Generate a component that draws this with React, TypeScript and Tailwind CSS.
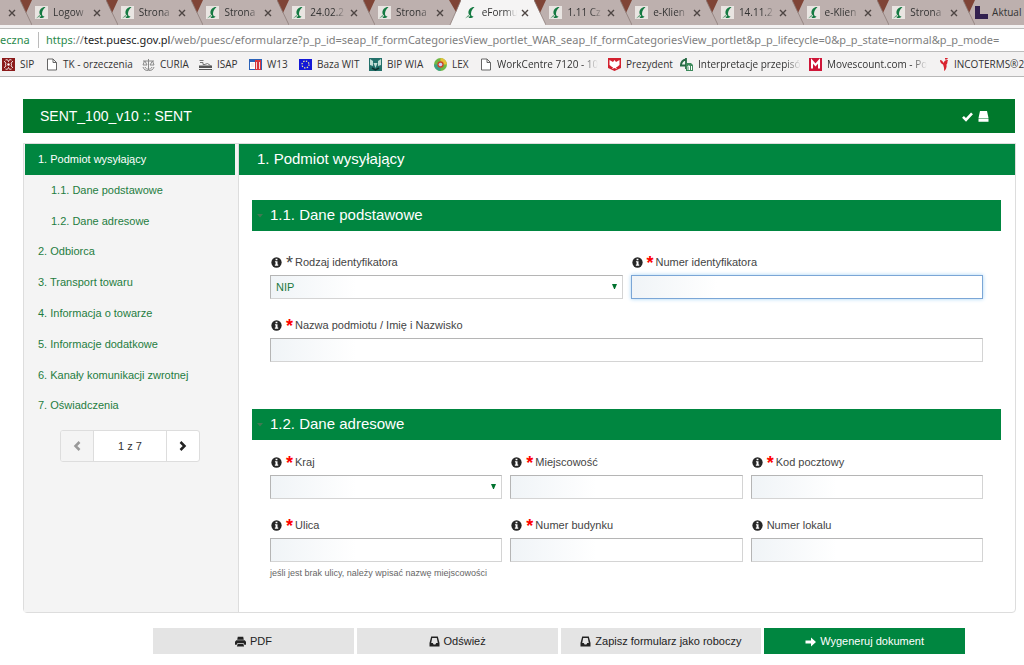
import type { ReactNode } from 'react'

const tabs = [
  { title: 'Logow' },
  { title: 'Strona' },
  { title: 'Strona' },
  { title: '24.02.2' },
  { title: 'Strona' },
  { title: 'eFormu', active: true },
  { title: '1.11 Cz' },
  { title: 'e-Klien' },
  { title: '14.11.2' },
  { title: 'e-Klien' },
  { title: 'Strona' },
]

const steps = [
  { label: '1. Podmiot wysyłający', active: true },
  { label: '1.1. Dane podstawowe', nested: true },
  { label: '1.2. Dane adresowe', nested: true },
  { label: '2. Odbiorca' },
  { label: '3. Transport towaru' },
  { label: '4. Informacja o towarze' },
  { label: '5. Informacje dodatkowe' },
  { label: '6. Kanały komunikacji zwrotnej' },
  { label: '7. Oświadczenia' },
]

/* Ikony */

function PuescIcon({ active }: { active?: boolean }) {
  return (
    <svg viewBox="0 0 13 13" className="size-[13px] shrink-0" aria-hidden="true">
      {!active && <rect width="13" height="13" fill="#e9e5e2" />}
      <path d="M10.500 1C7.500.6 4.600 3 4.400 6.200c0 1.800.7 2.800 1.800 3.400L4.500 12c2.500.3 4.300-.4 5-1.600-1.600 0-2.600-1-2.500-2.900C7.100 5 8.500 2.800 10.500 1z" fill="#157a42" />
      <path d="M1 12.500l3.400-3.500 1.300 1z" fill="#5f9f78" />
    </svg>
  )
}

function CloseIcon() {
  return (
    <svg viewBox="0 0 8 8" className="size-2" aria-hidden="true">
      <path d="M1 1l6 6M7 1L1 7" stroke="#4d4543" strokeWidth="1.400" />
    </svg>
  )
}

function PageIcon() {
  return (
    <svg viewBox="0 0 11 13" className="h-[13px] w-[11px] shrink-0" aria-hidden="true">
      <path d="M.5 1H6l3.500 3.500V12h-9zM6 1v3.500h3.500" fill="#fff" stroke="#666" />
    </svg>
  )
}

function InfoIcon() {
  return (
    <svg viewBox="0 0 12 12" className="size-[11px] shrink-0" aria-hidden="true">
      <circle cx="6" cy="6" r="5.600" fill="#262626" />
      <path d="M5 2h2v1.600H5zM4.300 4.600h2.800v3.700h.8v1.300H4.200V8.300H5V5.800h-.7z" fill="#fff" />
    </svg>
  )
}

function InboxIcon() {
  return (
    <svg viewBox="0 0 11 11" className="size-[11px]" aria-hidden="true">
      <path fillRule="evenodd" d="M2.200.5h6.600L10.500 7v3.500H.5V7zM3.200 2 2.200 7h1.600l.8 1.500h1.800L7.200 7h1.600l-1-5z" fill="#222" />
    </svg>
  )
}

function PrintIcon() {
  return (
    <svg viewBox="0 0 11 11" className="size-[11px]" aria-hidden="true">
      <path d="M2.800.8h5.400l.6 3H2.200zM1.300 4.300h8.400L11 5.800v3H9.300L8.700 7.300H2.300l-.6 1.500H0v-3z" fill="#222" />
      <path d="M2.600 8h5.800l.7 2.500H1.900z" fill="#222" />
    </svg>
  )
}

function Chevron({ flip }: { flip?: boolean }) {
  return (
    <svg viewBox="0 0 8 10" className="h-[10px] w-2" aria-hidden="true">
      <path d={flip ? 'M6.500 1l-4 4 4 4' : 'M1.500 1l4 4-4 4'} fill="none" stroke={flip ? '#999' : '#222'} strokeWidth="2.500" />
    </svg>
  )
}

const bookmarks: { label: string; width: string; narrow?: boolean; icon: ReactNode }[] = [
  {
    label: 'SIP',
    width: 'w-[45px]',
    icon: (
      <>
        <rect width="13" height="13" fill="#8b1a1a" />
        <path d="M3.500 2a2 2 0 0 1 3 1.500A2 2 0 0 1 9.500 2M3.500 11a2 2 0 0 0 3-1.500A2 2 0 0 0 9.500 11M2 3.500A2 2 0 0 1 3.500 6.500 2 2 0 0 1 2 9.500M11 3.500A2 2 0 0 0 9.500 6.500 2 2 0 0 0 11 9.500" fill="none" stroke="#fff" />
        <circle cx="6.500" cy="6.500" r="1.200" fill="#fff" />
      </>
    ),
  },
  { label: 'TK - orzeczenia', width: 'w-[95px]', icon: null },
  {
    label: 'CURIA',
    width: 'w-[57px]',
    icon: <path d="M6.500 1v11M1 3h11M2.500 3L1 7h4L3 3M10.500 3L8 7h4zM3 9c1 3 6 3 7 0M1 9c1 5 10 5 11 0" fill="none" stroke="#888" />,
  },
  {
    label: 'ISAP',
    width: 'w-[50px]',
    icon: (
      <>
        <path d="M.5 2.500h4M1 4.500h3v2h2M5.500 6.500l3-1 3 2" fill="none" stroke="#777" />
        <path d="M0 7.500h13V10H0zM0 11h13v1H0z" fill="#555" />
      </>
    ),
  },
  {
    label: 'W13',
    width: 'w-[50px]',
    icon: (
      <>
        <rect y="1" width="13" height="11" fill="#2b62b8" />
        <path d="M1 4h5v7H1z" fill="#fff" />
        <path d="M6 2h6v10H6z" fill="#d8353c" />
        <path d="M2 6h3M2 8h3M7.500 4v7M10.500 4v7" fill="none" stroke="#f3d7da" />
      </>
    ),
  },
  {
    label: 'Baza WIT',
    width: 'w-[70px]',
    icon: (
      <>
        <rect y="1" width="13" height="11" fill="#1418d8" />
        <circle cx="6.500" cy="6.500" r="3.500" fill="none" stroke="#f4ef9a" strokeWidth="1.300" strokeDasharray="1.300 1.450" />
      </>
    ),
  },
  {
    label: 'BIP WIA',
    width: 'w-[65px]',
    icon: (
      <>
        <rect width="13" height="13" fill="#23706a" />
        <path d="M1 1l3 2v5l-3-1zM12 1L9 3v5l3-1zM4.500 5h4l-2 5z" fill="#c3dcd5" />
        <path d="M3 10l3.500 2L10 10" fill="none" stroke="#0f2f2d" strokeWidth="1.500" />
      </>
    ),
  },
  {
    label: 'LEX',
    width: 'w-[47px]',
    icon: (
      <>
        <circle cx="6.500" cy="6.500" r="6.500" fill="#6fb844" />
        <path d="M6.500 0A6.500 6.500 0 0 1 13 6.500H6.500z" fill="#e6c136" />
        <path d="M0 6.500A6.500 6.500 0 0 0 6.500 13V6.500z" fill="#39a08a" />
        <circle cx="6.500" cy="6.500" r="3.200" fill="#c8462e" />
        <circle cx="6.500" cy="6.500" r="1.800" fill="#c9d3ff" />
      </>
    ),
  },
  { label: 'WorkCentre 7120 - 10', width: 'w-[127px]', icon: null },
  {
    label: 'Prezydent',
    width: 'w-[72px]',
    icon: (
      <>
        <path d="M0 0h13v10l-6.500 3L0 10z" fill="#d3202e" />
        <path d="M1.500 2L5 4l1.500-2L8 4l3.500-2v5L9 9H8l1 2-2.500-1L4 11l1-2H4L1.500 7z" fill="#fff" />
      </>
    ),
  },
  {
    label: 'Interpretacje przepisó',
    width: 'w-[129px]',
    icon: (
      <>
        <path d="M6 0v11M1 7.500C1 4 3 2 6 1.500M0 7.500h7" fill="none" stroke="#276b45" strokeWidth="1.800" />
        <path d="M6 5h5l2 2v6H6z" fill="#3d8a5c" />
        <path d="M8 12V8h1.500v4M11.500 8v4" fill="none" stroke="#fff" />
      </>
    ),
  },
  {
    label: 'Movescount.com - Po',
    width: 'w-[130px]',
    icon: (
      <>
        <rect width="13" height="13" fill="#cf1638" />
        <path d="M3 10.500V3l3.500 4L10 3v7.500" fill="none" stroke="#fff" strokeWidth="2" />
      </>
    ),
  },
  {
    label: 'INCOTERMS®2',
    width: 'w-[84px]',
    narrow: true,
    icon: <path d="M1 2c2 0 3 1.500 3.500 3C5 3 6.500 1.500 9 2c-1 1.500 0 3-1.500 4.500C8 9 7 12 5 13c.5-3-.5-5-1-6.500C2 6 1 4 1 2zM6 0h3l-1 1.500H6z" fill="#d9232e" />,
  },
]

/* Ukośna krawędź między kartami przeglądarki */
function TabEdge({ before, after }: { before?: boolean; after?: boolean }) {
  return (
    <svg viewBox="0 0 12 25" className="h-[25px] w-3 shrink-0" aria-hidden="true">
      <rect width="12" height="25" fill="#bdb0ae" />
      {before && <path d="M0 0l12 25H0z" fill="#f5f4f4" />}
      {after && <path d="M12 0L1 25h11z" fill="#f5f4f4" />}
      <path d={after ? 'M0 0h12L7 12z' : 'M0 0h12L6 13z'} fill="#7f4436" />
      <path d={after ? 'M12 0L1 25' : 'M0 0l12 25'} fill="none" stroke="#8d7c79" strokeWidth=".8" />
    </svg>
  )
}

function Browser() {
  return (
    <header className="overflow-hidden font-['Open_Sans','Noto_Sans',sans-serif] text-[10px] text-[#333]">
      <div className="flex h-[25px] bg-[#bdb0ae]">
        <button type="button" aria-label="Zamknij kartę" className="flex w-5 shrink-0 items-center justify-center pl-1">
          <CloseIcon />
        </button>
        {tabs.map((tab, i) => (
          <div key={i} className="flex min-w-0 flex-1">
            <TabEdge before={tabs[i - 1]?.active} after={tab.active} />
            <div className={`flex min-w-0 flex-1 items-center pr-[5px] pl-[3px] ${tab.active ? 'bg-[#f5f4f4]' : ''}`}>
              <PuescIcon active={tab.active} />
              <span className="ml-[5px] min-w-0 flex-1 whitespace-nowrap [mask-image:linear-gradient(to_right,black_65%,transparent)]">
                {tab.title}
              </span>
              <button type="button" aria-label="Zamknij kartę" className="ml-1 shrink-0">
                <CloseIcon />
              </button>
            </div>
          </div>
        ))}
        <div className="flex w-[61px] shrink-0">
          <TabEdge />
          <div className="flex min-w-0 flex-1 items-center gap-1 overflow-hidden">
            <svg viewBox="0 0 13 13" className="size-[13px] shrink-0" aria-hidden="true">
              <path d="M0 0h5v8h8v5H0z" fill="#32214f" />
            </svg>
            <span className="whitespace-nowrap">Aktual</span>
          </div>
        </div>
      </div>

      {/* Pasek adresu */}
      <div className="border-b border-[#bcbcbc] bg-[#f3f2f2] pt-[3px]">
        <div className="flex h-[23px] items-center border-t border-[#bcbcbc] bg-white font-['Noto_Sans',sans-serif] text-[11px] whitespace-nowrap text-[#808080]">
          <span className="w-[30px] shrink-0 text-[#2b8a4c]">eczna</span>
          <span className="mr-[7px] ml-2 h-4 w-px shrink-0 bg-[#bbb]" />
          <span>
            <span className="text-[#2b8a4c]">https</span>://<span className="text-[#222]">test.puesc.gov.pl</span>
            /web/puesc/eformularze?p_p_id=seap_lf_formCategoriesView_portlet_WAR_seap_lf_formCategoriesView_portlet&amp;p_p_lifecycle=0&amp;p_p_state=normal&amp;p_p_mode=
          </span>
        </div>
      </div>

      {/* Zakładki */}
      <nav className="flex h-[25px] items-center border-b border-[#b8b8b8] bg-[#f3f2f2] pl-[2px]">
        {bookmarks.map((b) => (
          <a key={b.label} href="#" className={`flex shrink-0 items-center gap-[5px] ${b.width}`}>
            {b.icon ? (
              <svg
                viewBox={b.narrow ? '0 0 10 13' : '0 0 13 13'}
                className={b.narrow ? 'h-[13px] w-[10px] shrink-0' : 'size-[13px] shrink-0'}
                aria-hidden="true"
              >
                {b.icon}
              </svg>
            ) : (
              <PageIcon />
            )}
            <span className={b.label.length > 15 ? 'whitespace-nowrap [mask-image:linear-gradient(to_right,black_85%,transparent)]' : 'whitespace-nowrap'}>
              {b.label}
            </span>
          </a>
        ))}
      </nav>
    </header>
  )
}

type FieldProps = {
  id: string
  label: string
  mark?: 'red' | 'gray'
  options?: string[]
  hint?: string
  focused?: boolean
  className?: string
}

function Field({ id, label, mark, options, hint, focused, className = '' }: FieldProps) {
  const box = 'block h-6 w-full rounded-none border bg-linear-to-r from-[#f0f4f7] to-white to-[85px] px-[5px] text-[11px] text-[#1b7a3e] outline-none'
  const edge = focused
    ? 'border-[#7ba6d6] shadow-[0_0_4px_#a5d3f5]'
    : 'border-[#d4d4d4] border-t-[#b5b5b5] border-l-[#b5b5b5]'

  return (
    <div className={className}>
      <label htmlFor={id} className="mb-1 flex h-[18px] items-center gap-1 pl-px text-[#444]">
        <InfoIcon />
        <span className="flex items-center gap-[2px]">
          {mark && (
            <span className={`h-[18px] text-[18px] leading-[20px] ${mark === 'red' ? 'font-bold text-[#f00]' : 'text-[#444]'}`}>*</span>
          )}
          {label}
        </span>
      </label>
      {options ? (
        <div className="relative">
          <select id={id} className={`${box} ${edge} appearance-none`}>
            {options.map((o) => (
              <option key={o}>{o}</option>
            ))}
          </select>
          <svg viewBox="0 0 6 6" className="pointer-events-none absolute top-[9px] right-[6px] size-[5px]" aria-hidden="true">
            <path d="M0 0h6L3.500 6h-1z" fill="#00722e" />
          </svg>
        </div>
      ) : (
        <input id={id} type="text" className={`${box} ${edge}`} />
      )}
      {hint && <p className="mt-1 text-[9px] leading-[14px] text-[#666]">{hint}</p>}
    </div>
  )
}

function SectionTitle({ children }: { children: ReactNode }) {
  return (
    <h3 className="flex h-[31px] items-center gap-[7px] bg-[#008640] pl-[5px] text-[15px] text-white">
      <svg viewBox="0 0 6 4" className="h-1 w-[6px]" aria-hidden="true">
        <path d="M0 0h6L3 3.500z" fill="#3f7a52" />
      </svg>
      {children}
    </h3>
  )
}

export default function App() {
  return (
    <div className="min-h-screen bg-white font-['Liberation_Sans',Arial,sans-serif] text-[11px] text-[#333]">
      <Browser />

      <main className="pt-[22px] pr-2 pb-[11px] pl-[23px]">
        <div className="mr-px flex h-[34px] items-center justify-between bg-[#00792c] pr-[26px] pl-[17px] text-white">
          <h1 className="text-[14px]">SENT_100_v10 :: SENT</h1>
          <div className="flex items-center gap-[5px]">
            <svg viewBox="0 0 11 11" className="size-[11px]" aria-label="Sprawdź">
              <path d="M1 5.800l3 3 6-6.500" fill="none" stroke="#fff" strokeWidth="2.600" />
            </svg>
            <svg viewBox="0 0 11 11" className="size-[11px]" aria-label="Dysk">
              <path d="M2 0h7l1.500 7h-10zM.5 7.600h10v3.200H.5z" fill="#fff" />
            </svg>
          </div>
        </div>

        <div className="mt-[10px] flex rounded-b border border-[#ddd]">
          <aside className="w-[215px] shrink-0 border-r border-[#ddd] bg-[#f4f4f4] pb-[149px]">
            <ul className="mr-[3px] ml-px grid h-[277px] auto-rows-fr">
              {steps.map((s) => (
                <li key={s.label} className="flex">
                  <a
                    href="#"
                    className={`flex flex-1 items-center pr-2 ${s.nested ? 'pl-[26px]' : 'pl-[13px]'} ${s.active ? 'bg-[#008640] text-white' : 'text-[#1f7d41]'}`}
                  >
                    {s.label}
                  </a>
                </li>
              ))}
            </ul>
            <div className="mt-[9px] ml-9 flex h-8 w-[140px] overflow-hidden rounded-[3px] border border-[#ddd] bg-white">
              <button type="button" disabled aria-label="Poprzednia" className="flex w-8 items-center justify-center bg-[#f4f4f4]">
                <Chevron flip />
              </button>
              <span className="flex flex-1 items-center justify-center border-x border-[#ddd]">1 z 7</span>
              <button type="button" aria-label="Następna" className="flex w-8 items-center justify-center">
                <Chevron />
              </button>
            </div>
          </aside>

          <section className="min-w-0 flex-1">
            <h2 className="flex h-[31px] items-center bg-[#008640] pl-[18px] text-[15px] text-white">1. Podmiot wysyłający</h2>

            <div className="pt-[25px] pr-[14px] pb-8 pl-[13px]">
              <SectionTitle>1.1. Dane podstawowe</SectionTitle>
              <div className="grid grid-cols-2 gap-x-2 gap-y-[17px] px-[18px] pt-[22px] pb-[47px]">
                <Field id="rodzaj" label="Rodzaj identyfikatora" mark="gray" options={['NIP', 'PESEL']} />
                <Field id="numer" label="Numer identyfikatora" mark="red" focused />
                <Field id="nazwa" label="Nazwa podmiotu / Imię i Nazwisko" mark="red" className="col-span-2" />
              </div>

              <SectionTitle>1.2. Dane adresowe</SectionTitle>
              <div className="grid grid-cols-3 gap-x-2 gap-y-[17px] px-[18px] pt-[13px]">
                <Field id="kraj" label="Kraj" mark="red" options={['', 'Polska']} />
                <Field id="miejscowosc" label="Miejscowość" mark="red" />
                <Field id="kod" label="Kod pocztowy" mark="red" />
                <Field id="ulica" label="Ulica" mark="red" hint="jeśli jest brak ulicy, należy wpisać nazwę miejscowości" />
                <Field id="budynek" label="Numer budynku" mark="red" />
                <Field id="lokal" label="Numer lokalu" />
              </div>
            </div>
          </section>
        </div>

        <div className="mt-[15px] mr-[51px] ml-[130px] grid grid-cols-4 gap-[3px] text-[#222]">
          <button type="button" className="flex h-[26px] items-center justify-center gap-1 bg-[#e4e4e4]">
            <PrintIcon /> PDF
          </button>
          <button type="button" className="flex h-[26px] items-center justify-center gap-1 bg-[#e4e4e4]">
            <InboxIcon /> Odśwież
          </button>
          <button type="button" className="flex h-[26px] items-center justify-center gap-1 bg-[#e4e4e4]">
            <InboxIcon /> Zapisz formularz jako roboczy
          </button>
          <button type="button" className="flex h-[26px] items-center justify-center gap-1 bg-[#008640] text-white">
            <svg viewBox="0 0 11 11" className="size-[11px]" aria-hidden="true">
              <path d="M.5 4.500H6V1.500l5 4.500-5 4.500v-3H.5z" fill="#fff" />
            </svg>
            Wygeneruj dokument
          </button>
        </div>
      </main>
    </div>
  )
}
